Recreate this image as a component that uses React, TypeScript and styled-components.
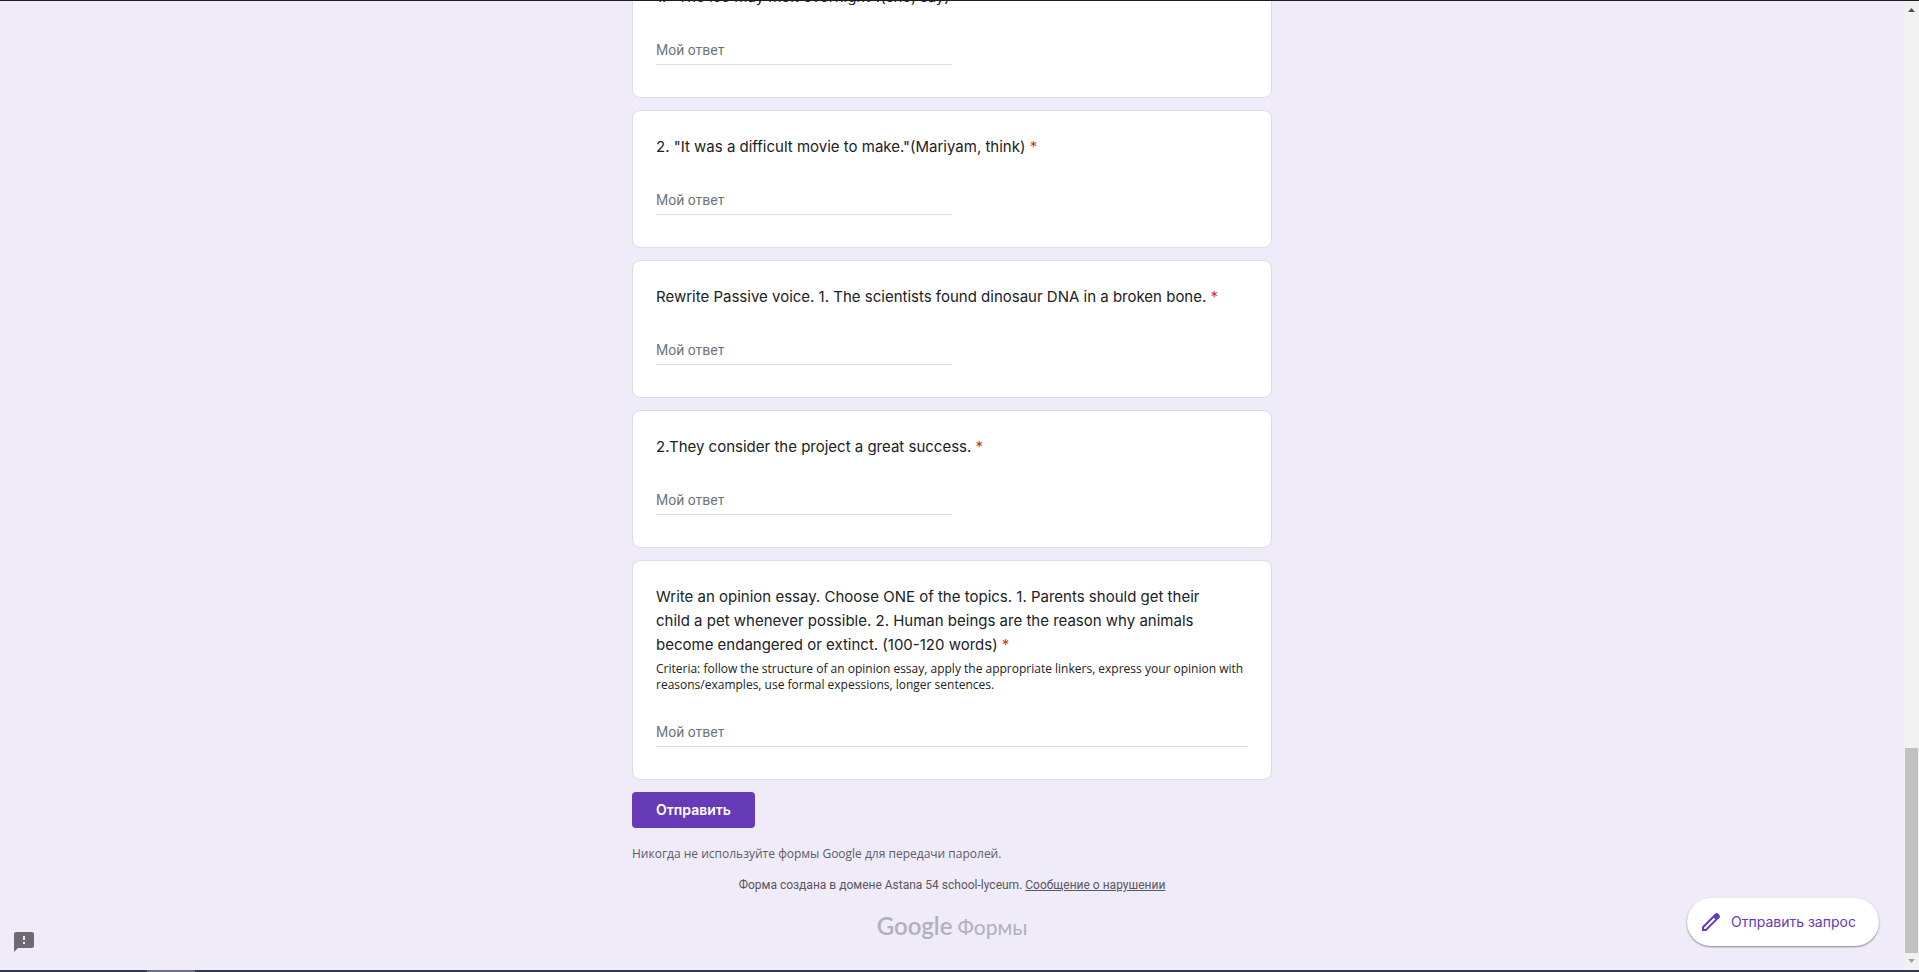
import React from "react";
import styled, { createGlobalStyle } from "styled-components";

const GlobalStyle = createGlobalStyle`
  * { box-sizing: border-box; }
  body { margin: 0; font-family: Roboto, "Liberation Sans", sans-serif; color: #202124; }
`;

const heading = `Inter, "Liberation Sans", sans-serif`;
const caption = `"Open Sans", "Liberation Sans", sans-serif`;

const Screen = styled.div`
  display: flex;
  flex-direction: column;
  height: 100vh;
  overflow: hidden;
  border-top: 1px solid #1f1b28;
`;

const Viewport = styled.div`
  position: relative;
  display: flex;
  flex: 1;
  min-height: 0;
  background: #efebf8;
`;

const Page = styled.main`
  flex: 1;
  display: flex;
  flex-direction: column;
  justify-content: flex-end;
  align-items: center;
  overflow: hidden;
`;

const Form = styled.form`
  display: flex;
  flex-direction: column;
  gap: 12px;
  width: 100%;
  max-width: 640px;
  padding-bottom: 27px;
`;

const Card = styled.section`
  display: flex;
  flex-direction: column;
  flex-shrink: 0;
  padding: 24px 23px 32px;
  background: #fff;
  border: 1px solid #dadce0;
  border-radius: 8px;
`;

const Question = styled.label`
  font: 400 15px/24px ${heading};
`;

const Required = styled.span`
  color: #d93025;
`;

const Description = styled.p`
  margin: 4px 0 0;
  font: 400 12px/16px ${caption};
`;

const Answer = styled.input<{ $wide?: boolean }>`
  width: ${(p) => (p.$wide ? "100%" : "50%")};
  height: 32px;
  margin-top: ${(p) => (p.$wide ? "22px" : "24px")};
  padding: 5px 0 2px;
  border: 0;
  border-bottom: 1px solid #dadce0;
  background: transparent;
  font: 400 14px/24px Roboto, "Liberation Sans", sans-serif;
  color: #202124;
  outline: none;
  &::placeholder { color: #70757a; opacity: 1; }
`;

const Submit = styled.button`
  align-self: flex-start;
  height: 36px;
  padding: 0 24px;
  border: 0;
  border-radius: 4px;
  background: #673ab7;
  color: #fff;
  font: 600 14px/20px ${heading};
`;

const Warning = styled.p`
  margin: 6px 0 0;
  font: 400 12px/16px ${caption};
  color: #5f5b66;
`;

const Notice = styled.p`
  margin: 3px 0 0;
  text-align: center;
  font-size: 12px;
  line-height: 16px;
  color: #5a5661;
  a { color: inherit; }
`;

const Brand = styled.a`
  display: flex;
  justify-content: center;
  align-items: baseline;
  gap: 5px;
  margin-top: 5px;
  font: 400 21px/32px Lato, "Liberation Sans", sans-serif;
  color: #b3b0ba;
  text-decoration: none;
  strong { font-size: 24px; font-weight: 600; }
`;

const FeedbackButton = styled.button`
  position: absolute;
  left: 12px;
  bottom: 16px;
  display: flex;
  padding: 0;
  border: 0;
  background: none;
  color: #6d6a74;
`;

const RequestButton = styled.button`
  position: absolute;
  right: 40px;
  bottom: 24px;
  display: flex;
  align-items: center;
  gap: 8px;
  min-width: 192px;
  height: 48px;
  padding: 0 20px 0 12px;
  border: 0;
  border-radius: 24px;
  background: #fff;
  box-shadow: 0 1px 2px rgba(60, 64, 67, 0.6);
  color: #673ab7;
  font: 400 14px/20px ${heading};
`;

const ScrollTrack = styled.div`
  display: flex;
  flex-direction: column;
  align-items: center;
  justify-content: space-between;
  width: 15px;
  background: #f1f1f1;
`;

const ScrollThumb = styled.div`
  flex: 0 0 205px;
  width: 13px;
  margin-top: auto;
  background: #c1c1c1;
`;

const ScrollArrow = styled.svg`
  flex: none;
  display: block;
`;

const Taskbar = styled.div`
  display: flex;
  height: 2px;
  background: #2b3d50;
`;

const TaskbarTab = styled.span`
  width: 48px;
  margin-left: 147px;
  background: #667585;
`;

type Item = { id: string; title: React.ReactNode; description?: string; wide?: boolean };

const items: Item[] = [
  { id: "q1", title: `1. "The ice may melt overnight".(she, say)` },
  { id: "q2", title: `2. "It was a difficult movie to make."(Mariyam, think)` },
  { id: "q3", title: "Rewrite Passive voice. 1. The scientists found dinosaur DNA in a broken bone." },
  { id: "q4", title: "2.They consider the project a great success." },
  {
    id: "q5",
    wide: true,
    title: (
      <>
        Write an opinion essay. Choose ONE of the topics. 1. Parents should get their
        <br />
        child a pet whenever possible. 2. Human beings are the reason why animals
        <br />
        become endangered or extinct. (100-120 words)
      </>
    ),
    description:
      "Criteria: follow the structure of an opinion essay, apply the appropriate linkers, express your opinion with reasons/examples, use formal expessions, longer sentences.",
  },
];

export default function App() {
  return (
    <>
      <GlobalStyle />
      <Screen>
        <Viewport>
          <Page>
            <Form onSubmit={(e) => e.preventDefault()}>
              {items.map((q) => (
                <Card key={q.id}>
                  <Question htmlFor={q.id}>
                    {q.title} <Required>*</Required>
                  </Question>
                  {q.description && <Description>{q.description}</Description>}
                  <Answer id={q.id} type="text" placeholder="Мой ответ" $wide={q.wide} />
                </Card>
              ))}
              <Submit type="submit">Отправить</Submit>
              <Warning>Никогда не используйте формы Google для передачи паролей.</Warning>
              <Notice>
                Форма создана в домене Astana 54 school-lyceum. <a href="#report">Сообщение о нарушении</a>
              </Notice>
              <Brand href="#forms">
                <strong>Google</strong>
                <span>Формы</span>
              </Brand>
            </Form>
          </Page>
          <ScrollTrack>
            <ScrollArrow width="15" height="17" viewBox="0 0 15 17">
              <path d="M4 11h7L7.500 7z" fill="#505050" />
            </ScrollArrow>
            <ScrollThumb />
            <ScrollArrow width="15" height="17" viewBox="0 0 15 17">
              <path d="M4 6h7l-3.500 4z" fill="#a3a3a3" />
            </ScrollArrow>
          </ScrollTrack>
          <FeedbackButton type="button" aria-label="Сообщить о проблеме">
            <svg width="24" height="24" viewBox="0 0 24 24" fill="currentColor">
              <path d="M20 2H4c-1.100 0-1.990.9-1.990 2L2 22l4-4h14c1.100 0 2-.9 2-2V4c0-1.100-.9-2-2-2zm-7 12h-2v-2h2v2zm0-4h-2V6h2v4z" />
            </svg>
          </FeedbackButton>
          <RequestButton type="button">
            <svg width="24" height="24" viewBox="0 0 24 24" fill="currentColor">
              <path d="M20.410 4.940l-1.350-1.350c-.78-.78-2.050-.78-2.830 0L3 16.820V21h4.180L20.410 7.770c.79-.78.79-2.050 0-2.830zM6.410 19.060L5 19v-1.360l9.820-9.820 1.410 1.410-9.820 9.830z" />
            </svg>
            Отправить запрос
          </RequestButton>
        </Viewport>
        <Taskbar>
          <TaskbarTab />
        </Taskbar>
      </Screen>
    </>
  );
}
